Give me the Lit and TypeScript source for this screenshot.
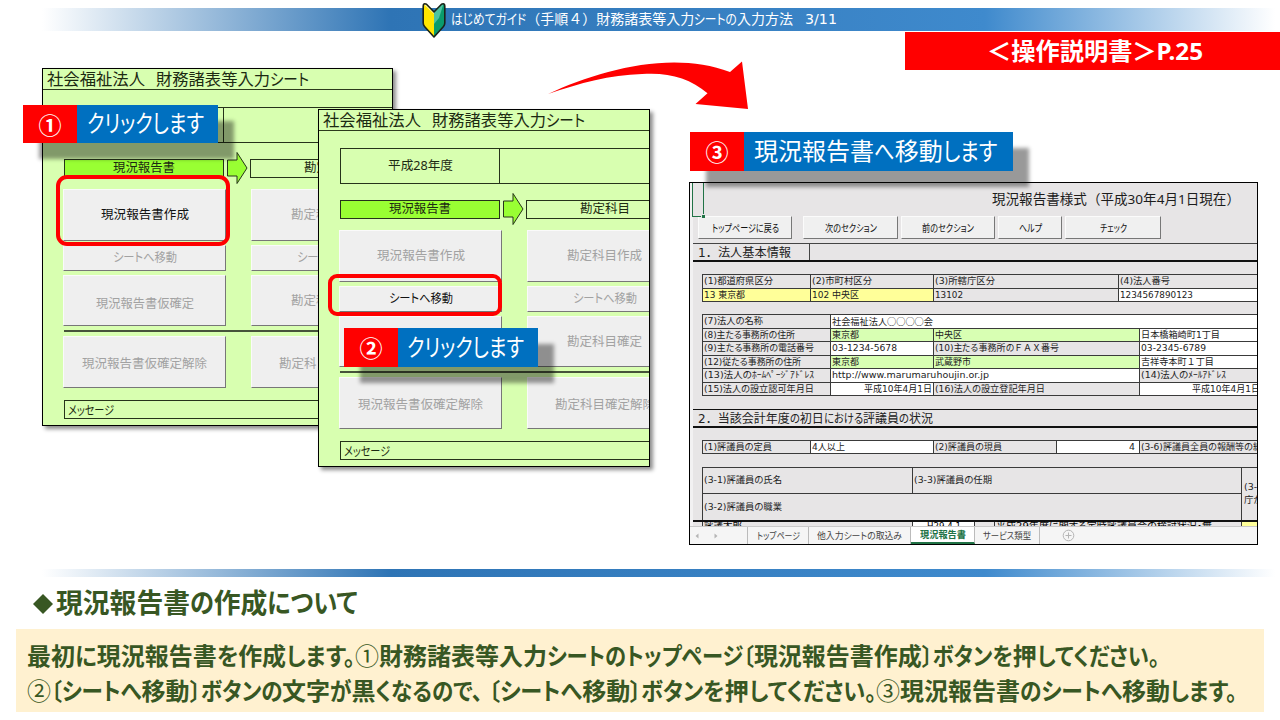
import { LitElement, html, css, nothing } from "lit";
import { customElement, property } from "lit/decorators.js";
import { classMap } from "lit/directives/class-map.js";
import { styleMap } from "lit/directives/style-map.js";

const KANA = /([\u3001\u3002\u3014\u3015\u3040-\u30ff＜＞]+)/;

/** One line of text set to an exact measure; with `kana` only the kana runs are condensed. */
@customElement("fit-text")
class FitText extends LitElement {
  @property() text = "";
  @property({ type: Number }) w = 0;
  @property({ type: Boolean }) kana = false;

  static styles = css`
    :host { display: inline-block; white-space: pre; flex: none; text-align: left; }
    .run, .in { display: inline-block; }
    .in { transform-origin: 0 50%; }
    .k { font-feature-settings: "palt"; }
  `;

  updated() {
    const ins = Array.from(this.renderRoot.querySelectorAll<HTMLElement>(".in"));
    ins.forEach((e) => {
      e.style.transform = "";
      e.parentElement!.style.width = "";
    });
    const widths = ins.map((e) => e.getBoundingClientRect().width);
    const isKana = ins.map((e) => !this.kana || e.classList.contains("k"));
    const fixed = widths.reduce((s, v, i) => s + (isKana[i] ? 0 : v), 0);
    const flexible = widths.reduce((s, v, i) => s + (isKana[i] ? v : 0), 0);
    if (!flexible) return;
    const k = (this.w - fixed) / flexible;
    ins.forEach((e, i) => {
      if (!isKana[i]) return;
      e.style.transform = `scaleX(${k})`;
      e.parentElement!.style.width = `${widths[i] * k}px`;
    });
    this.style.width = `${this.w}px`;
  }

  render() {
    const runs = this.kana ? this.text.split(KANA).filter((s) => s) : [this.text];
    return runs.map((r) => html`<span class="run"><span class=${classMap({ in: true, k: KANA.test(r) })}>${r}</span></span>`);
  }
}

const fit = (text: string, w: number, kana = false) => html`<fit-text .text=${text} .w=${w} .kana=${kana}></fit-text>`;

type Btn = { text: string; w: number };
const ROWS: { size: string; left: Btn; right: Btn }[] = [
  { size: "tall", left: { text: "現況報告書作成", w: 88 }, right: { text: "勘定科目作成", w: 75 } },
  { size: "short", left: { text: "シートへ移動", w: 64 }, right: { text: "シートへ移動", w: 64 } },
  { size: "mid", left: { text: "現況報告書仮確定", w: 98 }, right: { text: "勘定科目確定", w: 75 } },
  { size: "tall last", left: { text: "現況報告書仮確定解除", w: 125 }, right: { text: "勘定科目確定解除", w: 100 } },
];

@customElement("entry-panel")
class EntryPanel extends LitElement {
  @property({ type: Number }) enabled = 0;
  @property() year = "";
  @property({ type: Boolean }) bare = false;

  static styles = css`
    :host { display: block; box-sizing: border-box; height: 358px; border: 1px solid #000; background: #d8ffb0; overflow: hidden;
      color: #1c2a12; font: 12.5px/1 "Noto Sans", "Noto Sans CJK JP", sans-serif; }
    .title { display: flex; gap: 11px; height: 20px; padding: 0 0 0 4px; border-bottom: 1px solid #2c3a1c; font-size: 16.3px; line-height: 20px; }
    .year { display: flex; box-sizing: border-box; width: 500px; height: 36px; margin: 17px 0 0 21px; border: 1px solid #26331a; }
    .year-cell { display: flex; align-items: center; justify-content: center; width: 158px; border-right: 1px solid #26331a; }
    .steps { display: flex; width: 500px; height: 19px; margin: 16px 0 0 21px; }
    .step { display: flex; box-sizing: border-box; align-items: center; justify-content: center; width: 160px; border: 1px solid #26331a; }
    .step.next { width: 158px; }
    .step.on { background: #99ff33; }
    .arrow { flex: none; width: 21px; height: 34px; margin: -8px 2px 0 3px; }
    .row { display: flex; gap: 25px; width: 500px; margin: 4px 0 0 20px; }
    .row.first { margin-top: 11px; }
    .btn { display: flex; box-sizing: border-box; align-items: center; justify-content: center; width: 163px; padding-top: 1px; background: #efefef; color: #a2a2a2;
      border: 1px solid #fafafa; border-right-color: #777; border-bottom-color: #777; }
    .btn.second { width: 155px; }
    .btn.on { color: #111; }
    .tall .btn { height: 52px; }
    .mid .btn { height: 51px; padding-top: 2px; }
    .mid .btn.lead { padding-top: 7px; }
    .last .btn { padding-top: 5px; }
    .short .btn { height: 26px; }
    .line { height: 2px; margin: 4px 0 0 21px; background: #46533a; }
    .msg { display: flex; box-sizing: border-box; align-items: center; width: 500px; height: 19px; margin: 12px 0 0 21px; padding: 3px 0 0 3px; border: 1px solid #26331a; }
  `;

  render() {
    return html`
      <div class="title">${fit("社会福祉法人", 98)}${fit("財務諸表等入力シート", 153, true)}</div>
      <div class="year"><div class="year-cell">${this.year ? fit(this.year, 65) : nothing}</div></div>
      <div class="steps">
        <div class="step on">${fit("現況報告書", 62)}</div>
        <svg class="arrow" viewBox="0 0 21 34"><path d="M.5 9H10V1.500L20 17L10 32.500V25H.5Z" fill="#99ff33" stroke="#26331a" /></svg>
        <div class="step next">${fit("勘定科目", 50)}</div>
      </div>
      ${ROWS.map(
        (r, i) => html`
          ${i === 3 ? html`<div class="line"></div>` : nothing}
          <div class="row ${r.size} ${i === 0 ? "first" : ""}">
            <div class=${classMap({ btn: true, lead: true, on: i === this.enabled })}>${this.bare && i === 2 ? nothing : fit(r.left.text, r.left.w)}</div>
            <div class="btn second">${fit(r.right.text, r.right.w)}</div>
          </div>
        `,
      )}
      <div class="msg">${fit("メッセージ", 46)}</div>
    `;
  }
}

type Cell = { t?: string; tw?: number; w: number; c?: string; kana?: boolean };
type Row = { h: number; cells: Cell[] };

const TABLE_A: Row[] = [
  { h: 14, cells: [{ t: "(1)都道府県区分", tw: 69, w: 108 }, { t: "(2)市町村区分", tw: 60, w: 123 }, { t: "(3)所轄庁区分", tw: 60, w: 185 }, { t: "(4)法人番号", tw: 50, w: 150 }] },
  { h: 13, cells: [{ t: "13 東京都", tw: 41, w: 108, c: "yellow" }, { t: "102 中央区", tw: 47, w: 123, c: "yellow" }, { t: "13102", tw: 28, w: 185 }, { t: "1234567890123", tw: 73, w: 150, c: "white" }] },
];

const TABLE_B: Row[] = [
  { h: 14, cells: [{ t: "(7)法人の名称", tw: 59, w: 128 }, { t: "社会福祉法人○○○○会", tw: 101, w: 440, c: "white cjk" }] },
  { h: 13, cells: [{ t: "(8)主たる事務所の住所", tw: 91, w: 128 }, { t: "東京都", tw: 27, w: 103, c: "green" }, { t: "中央区", tw: 27, w: 206, c: "green" }, { t: "日本橋箱崎町1丁目", tw: 79, w: 130, c: "white" }] },
  { h: 14, cells: [{ t: "(9)主たる事務所の電話番号", tw: 110, w: 128 }, { t: "03-1234-5678", tw: 65, w: 103, c: "white" }, { t: "(10)主たる事務所のＦＡＸ番号", tw: 124, w: 206, kana: true }, { t: "03-2345-6789", tw: 65, w: 130, c: "white" }] },
  { h: 13, cells: [{ t: "(12)従たる事務所の住所", tw: 97, w: 128 }, { t: "東京都", tw: 27, w: 103, c: "green" }, { t: "武蔵野市", tw: 36, w: 206, c: "green" }, { t: "吉祥寺本町１丁目", tw: 73, w: 130, c: "white" }] },
  { h: 14, cells: [{ t: "(13)法人のﾎｰﾑﾍﾟｰｼﾞｱﾄﾞﾚｽ", tw: 110, w: 128 }, { t: "http://www.marumaruhoujin.or.jp", tw: 157, w: 309, c: "white" }, { t: "(14)法人のﾒｰﾙｱﾄﾞﾚｽ", tw: 85, w: 130 }] },
  { h: 13, cells: [{ t: "(15)法人の設立認可年月日", tw: 110, w: 128 }, { t: "平成10年4月1日", tw: 68, w: 103, c: "white right" }, { t: "(16)法人の設立登記年月日", tw: 110, w: 206 }, { t: "平成10年4月1日", tw: 68, w: 122, c: "white right" }] },
];

const TABLE_C: Row[] = [
  { h: 13, cells: [{ t: "(1)評議員の定員", tw: 68, w: 108 }, { t: "4人以上", tw: 33, w: 123, c: "white" }, { t: "(2)評議員の現員", tw: 67, w: 123 }, { t: "4", tw: 6, w: 83, c: "white right pad" }, { t: "(3-6)評議員全員の報酬等の総", tw: 121, w: 140 }] },
];

const TABLE_D: Row[] = [
  { h: 26, cells: [{ t: "(3-1)評議員の氏名", tw: 78, w: 210 }, { t: "(3-3)評議員の任期", tw: 78, w: 329 }] },
  { h: 27, cells: [{ t: "(3-2)評議員の職業", tw: 78, w: 539 }] },
];

const BUTTONS = [
  { t: "トップページに戻る", tw: 67, w: 94, gap: 0 },
  { t: "次のセクション", tw: 52, w: 95, gap: 11 },
  { t: "前のセクション", tw: 52, w: 94, gap: 3 },
  { t: "ヘルプ", tw: 23, w: 64, gap: 3 },
  { t: "チェック", tw: 27, w: 96, gap: 3 },
];

@customElement("report-sheet")
class ReportSheet extends LitElement {
  static styles = css`
    :host { display: flex; flex-direction: column; box-sizing: border-box; width: 569px; height: 363px; border: 1px solid #000; overflow: hidden;
      background: #e7e5e6; color: #222; font: 9px/1 "DejaVu Sans", "Noto Sans CJK JP", sans-serif; }
    .body { flex: 1; min-height: 0; overflow: hidden; border-left: 3px solid #f2f1f2; }
    .sel { position: absolute; left: 2px; top: 0; width: 10px; height: 33px; border: solid #217346; border-width: 0 1px 1px; }
    .knob { position: absolute; right: -2px; bottom: -2px; width: 3px; height: 3px; background: #217346; border: solid #e7e5e6; border-width: 1px 0 0 1px; }
    .title { height: 33px; padding-left: 299px; line-height: 32px; font-family: "Noto Sans", "Noto Sans CJK JP", sans-serif; font-size: 13.400px; color: #1c1c1c; }
    .buttons { display: flex; width: 600px; height: 23px; padding-left: 5px; font-size: 10.500px; }
    .btn { display: flex; flex: none; box-sizing: border-box; align-items: center; justify-content: center; padding-top: 1px; background: #f0f0f0; border: 1px solid #fbfbfb;
      border-right-color: #777; border-bottom-color: #777; color: #111; }
    .section { display: flex; box-sizing: border-box; height: 19px; margin-top: 4px; border-top: 1px solid #444; border-bottom: 2px solid #111; }
    .section.two { margin-top: 13px; border-top-color: #111; }
    .name { display: flex; align-items: center; width: 111px; padding: 1px 0 0 5px; font-size: 12px; }
    .name.ruled { border-right: 1px solid #444; }
    .table { width: 620px; margin: 12px 0 0 9px; box-sizing: border-box; border: solid #3a3a3a; border-width: 0 0 1px 1px; }
    .row { display: flex; box-sizing: border-box; border-top: 1px solid #3a3a3a; }
    .cell { display: flex; flex: none; box-sizing: border-box; align-items: center; padding: 0 1px; border-right: 1px solid #3a3a3a; }
    .white { background: #fff; }
    .yellow { background: #ffff99; }
    .green { background: #d8ffb3; }
    .cjk { font-family: "Noto Sans CJK JP", sans-serif; }
    .right { justify-content: flex-end; }
    .pad { padding-right: 4px; }
    .split { display: flex; width: 620px; margin-top: 13px; border-bottom: 2px solid #111; }
    .split .table { width: 540px; margin-top: 0; border-bottom: 0; }
    .side { display: flex; flex: none; flex-direction: column; justify-content: center; gap: 4px; width: 70px; border-top: 1px solid #3a3a3a; padding-left: 2px; }
    .cut { display: flex; width: 620px; margin-left: 9px; height: 12px; border-left: 1px solid #3a3a3a; color: #000; }
    .cut .cell { align-items: flex-start; padding-top: 0; }
    .date { justify-content: center; }
    .tabs { display: flex; flex: none; box-sizing: border-box; height: 18px; border-top: 1px solid #c9c9c9; background: #f5f5f5; color: #444; font-size: 9.500px; align-items: stretch; }
    .nav { display: flex; box-sizing: border-box; align-items: center; gap: 15px; width: 58px; padding-left: 5px; border-right: 1px solid #bbb; }
    .tab { display: flex; box-sizing: border-box; align-items: center; justify-content: center; border-right: 1px solid #bbb; }
    .tab.active { background: #fff; color: #217346; font-weight: 700; border-bottom: 2px solid #217346; padding-top: 1px; }
    .plus { width: 13px; height: 13px; margin: 2px 0 0 22px; }
  `;

  rows(rows: Row[]) {
    return rows.map(
      (r) => html`<div class="row" style=${styleMap({ height: `${r.h}px` })}>
        ${r.cells.map((c) => html`<div class="cell ${c.c ?? ""}" style=${styleMap({ width: `${c.w}px` })}>${c.t ? fit(c.t, c.tw!, !!c.kana) : nothing}</div>`)}
      </div>`,
    );
  }

  render() {
    return html`
      <div class="body">
        <div class="title">${fit("現況報告書様式（平成30年4月1日現在）", 248)}</div>
        <div class="buttons">
          ${BUTTONS.map((b) => html`<div class="btn" style=${styleMap({ width: `${b.w}px`, marginLeft: `${b.gap}px` })}>${fit(b.t, b.tw)}</div>`)}
        </div>
        <div class="section"><div class="name ruled">${fit("1．法人基本情報", 93)}</div></div>
        <div class="table">${this.rows(TABLE_A)}</div>
        <div class="table">${this.rows(TABLE_B)}</div>
        <div class="section two"><div class="name">${fit("2．当該会計年度の初日における評議員の状況", 235, true)}</div></div>
        <div class="table">${this.rows(TABLE_C)}</div>
        <div class="split">
          <div class="table">${this.rows(TABLE_D)}</div>
          <div class="side"><div>${fit("(3-5)所轄", 42)}</div><div>${fit("庁からの", 36)}</div></div>
        </div>
        <div class="cut">
          <div class="cell" style=${styleMap({ width: "210px" })}>${fit("評議太郎", 38)}</div>
          <div class="cell white date" style=${styleMap({ width: "62px" })}>${fit("H29.4.1", 34)}</div>
          <div class="cell" style=${styleMap({ width: "20px" })}></div>
          <div class="cell" style=${styleMap({ width: "247px" })}>${fit("平成29年度に関する定時評議員会の検討状況・無", 216)}</div>
          <div class="cell yellow" style=${styleMap({ width: "40px" })}></div>
        </div>
      </div>
      <div class="sel"><div class="knob"></div></div>
      <div class="tabs">
        <div class="nav">
          <svg width="4" height="6" viewBox="0 0 4 6"><path d="M3.500 .5L.5 3L3.500 5.500Z" fill="#b5b5b5" /></svg>
          <svg width="4" height="6" viewBox="0 0 4 6"><path d="M.5 .5L3.500 3L.5 5.500Z" fill="#b5b5b5" /></svg>
        </div>
        <div class="tab" style=${styleMap({ width: "61px" })}>${fit("トップページ", 43)}</div>
        <div class="tab" style=${styleMap({ width: "102px" })}>${fit("他入力シートの取込み", 85)}</div>
        <div class="tab active" style=${styleMap({ width: "64px" })}>${fit("現況報告書", 46)}</div>
        <div class="tab" style=${styleMap({ width: "65px" })}>${fit("サービス類型", 48)}</div>
        <svg class="plus" viewBox="0 0 13 13"><circle cx="6.500" cy="6.500" r="5.300" fill="none" stroke="#b5b5b5" /><path d="M6.500 3.500v6M3.500 6.500h6" stroke="#b5b5b5" /></svg>
      </div>
    `;
  }
}

@customElement("app-root")
class AppRoot extends LitElement {
  static styles = css`
    :host { display: flex; flex-direction: column; position: relative; box-sizing: border-box; width: 1280px; height: 720px; padding-top: 8px; overflow: hidden;
      background: #fff; font-family: "Noto Sans", "Noto Sans CJK JP", sans-serif; line-height: 1; }
    .bar { display: flex; align-items: center; flex: none; height: 23px; color: #fff; padding-left: 422px;
      background: linear-gradient(90deg, #fff 42px, #2e74b5 390px, #3f8acd 985px, #fff 1275px);
      font: 14px/23px "DejaVu Sans", "Noto Sans CJK JP", sans-serif; }
    .mark { width: 24px; height: 36px; margin: 0 5px 0 0; flex: none; }
    .page { margin-left: 12px; }
    .ref { display: flex; flex: none; align-items: center; justify-content: center; box-sizing: border-box; align-self: flex-end; width: 375px; height: 38px; margin-top: 1px;
      background: #f00; color: #fff; font-size: 24px; font-weight: 700; }
    .ref fit-text { margin-right: -5px; }
    .stage { flex: none; height: 499px; }
    .rule { flex: none; height: 8px; background: linear-gradient(90deg, #fff 42px, #2e74b5 390px, #3f8acd 985px, #fff 1275px); }
    .heading { flex: none; display: flex; align-items: center; height: 52px; padding: 0 0 0 33px; color: #385723; font-size: 26.800px; font-weight: 700; }
    .dia { width: 20px; height: 20px; margin: 2px 3px 0 0; flex: none; }
    .note { flex: none; box-sizing: border-box; height: 83px; margin: 0 16px; padding: 10px 0 0 11px; background: #fff1d0; color: #385723; font-size: 24px; font-weight: 700; }
    .note-line { display: flex; height: 34.500px; line-height: 34px; white-space: nowrap; }
    .light { font-weight: 400; }
    .win { position: absolute; box-shadow: 3px 3px 4px rgba(0, 0, 0, 0.45); }
    .w1 { left: 42px; top: 68px; width: 351px; }
    .w2 { left: 318px; top: 109px; width: 332px; }
    .w3 { left: 689px; top: 182px; box-shadow: none; }
    .ring { position: absolute; box-sizing: border-box; border: 4px solid #f00; border-radius: 11px; }
    .r1 { left: 56px; top: 175px; width: 174px; height: 71px; }
    .r2 { left: 328px; top: 274px; width: 174px; height: 42px; border-radius: 9px; }
    .call { position: absolute; display: flex; height: 38px; background: #0070c0; color: #fff; font-size: 24px; box-shadow: 16px 16px 4px rgba(0, 0, 0, 0.4); }
    .num { display: flex; align-items: center; justify-content: center; width: 54px; background: #f00; font-family: "Noto Sans CJK JP", sans-serif; font-size: 23px; font-weight: 700; }
    .say { display: flex; align-items: center; padding: 0 0 2px 10px; }
    .c1 { left: 23px; top: 105px; width: 195px; }
    .c2 { left: 344px; top: 328px; width: 194px; height: 39px; }
    .c2 .say { padding-left: 9px; }
    .c3 { left: 690px; top: 132px; width: 323px; height: 39px; }
    .swoosh { position: absolute; left: 540px; top: 55px; width: 215px; height: 60px; }
  `;

  render() {
    return html`
      <div class="bar">
        <svg class="mark" viewBox="0 0 24 36">
          <path d="M1.500 2.500Q3 1 4.500 2.200L12 10V35L2.500 24.500Q1.200 23 1.200 21Z" fill="#ffe600" />
          <path d="M22.500 2.500Q21 1 19.500 2.200L12 10V35L21.500 24.500Q22.800 23 22.800 21Z" fill="#0a9b6c" />
          <path d="M12 10L19.500 2.200Q20.500 1.500 21.500 2L17 16L12 22Z" fill="#4cc3a0" />
          <path d="M4.500 2.200Q3 1 1.800 2.500L12 12V10Z" fill="#fff59a" />
          <path d="M12 10L4.500 2.200Q1.300 .8 1.200 4V21Q1.200 23 2.500 24.500L12 35L21.500 24.500Q22.800 23 22.800 21V4Q22.700 .8 19.500 2.200Z" fill="none" stroke="#1a2418" stroke-width="1.600" stroke-linejoin="round" />
        </svg>
        ${fit("はじめてガイド（手順４）財務諸表等入力シートの入力方法", 342, true)}
        <span class="page">${fit("3/11", 32)}</span>
      </div>
      <div class="ref">${fit("＜操作説明書＞P.25", 216)}</div>
      <div class="stage">
        <entry-panel class="win w1" .enabled=${0}></entry-panel>
        <div class="ring r1"></div>
        <div class="call c1"><div class="num">①</div><div class="say">${fit("クリックします", 117)}</div></div>
        <entry-panel class="win w2" .enabled=${1} .year=${"平成28年度"} .bare=${true}></entry-panel>
        <div class="ring r2"></div>
        <div class="call c2"><div class="num">②</div><div class="say">${fit("クリックします", 117)}</div></div>
        <report-sheet class="win w3"></report-sheet>
        <div class="call c3"><div class="num">③</div><div class="say">${fit("現況報告書へ移動します", 243, true)}</div></div>
        <svg class="swoosh" viewBox="540 55 215 60">
          <path d="M548 94C600 70 672 50 730 72L742 61.500L748 109L695.500 104L707.500 93.300C690 78 668 72 642 74C610 75 580 83 548 94Z" fill="#f00" />
        </svg>
      </div>
      <div class="rule"></div>
      <div class="heading">
        <svg class="dia" viewBox="0 0 20 20"><path d="M10 0L20 10L10 20L0 10Z" fill="#385723" /></svg>
        ${fit("現況報告書の作成について", 302, true)}
      </div>
      <div class="note">
        <div class="note-line">
          ${fit("最初に現況報告書を作成します。", 328, true)}<span class="light">${fit("①", 24)}</span>${fit("財務諸表等入力シートのトップページ〔現況報告書作成〕ボタンを押してください。", 780, true)}
        </div>
        <div class="note-line">
          <span class="light">${fit("②", 24)}</span>${fit("〔シートへ移動〕ボタンの文字が黒くなるので、", 432, true)}${fit(" 〔シートへ移動〕ボタンを押してください。", 393, true)}<span class="light">${fit("③", 24)}</span>${fit("現況報告書のシートへ移動します。", 337, true)}
        </div>
      </div>
    `;
  }
}
